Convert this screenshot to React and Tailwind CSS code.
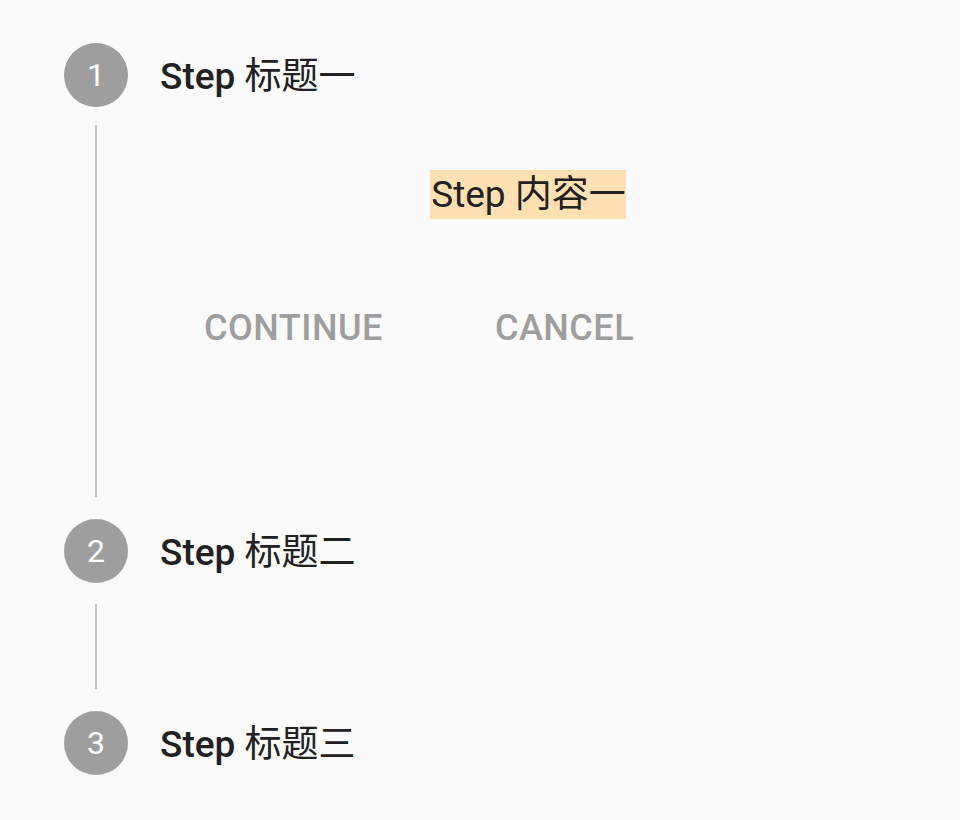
import React from "react";

function Header({ n, title }) {
  return (
    <div className="flex h-[64px] items-center">
      <div className="flex h-[64px] w-[64px] items-center justify-center rounded-full bg-[#9e9e9e] text-[32px] leading-none text-white">
        {n}
      </div>
      <div className="ml-[32px] mt-[3px] text-[37px] leading-none text-[#212121]">
        <span className="font-medium">Step</span>
        <span className="font-normal"> {title}</span>
      </div>
    </div>
  );
}

export default function App() {
  return (
    <div className="h-[820px] w-[960px] bg-[#fafafa] pl-[64px] pt-[43px] font-['Roboto','Noto_Sans_CJK_SC',sans-serif]">
      <Header n="1" title="标题一" />
      <div className="flex h-[412px]">
        <div className="flex w-[64px] justify-center pb-[22px] pt-[18px]">
          <div className="w-[2px] bg-[#c2c2c2]" />
        </div>
        <div className="ml-[32px] flex w-[736px] flex-col">
          <div className="mt-[63px] flex justify-center">
            <span className="h-[49px] bg-[#ffe0b2] pl-[1px] text-[37px] leading-[50px] text-[#212121]">
              Step 内容一
            </span>
          </div>
          <div className="mt-[45px] flex h-[128px] items-center pl-[44px] text-[36px] font-medium leading-none text-[#9e9e9e]">
            <span className="tracking-[0.5px]">CONTINUE</span>
            <span className="ml-[112px] tracking-[0.5px]">CANCEL</span>
          </div>
        </div>
      </div>
      <Header n="2" title="标题二" />
      <div className="flex h-[128px]">
        <div className="flex w-[64px] justify-center pb-[22px] pt-[21px]">
          <div className="w-[2px] bg-[#c2c2c2]" />
        </div>
      </div>
      <Header n="3" title="标题三" />
    </div>
  );
}
